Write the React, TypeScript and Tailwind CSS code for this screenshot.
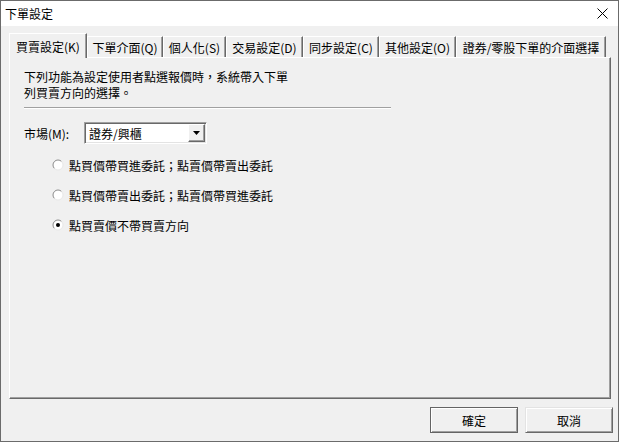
import React from "react";

const tabs = [
  { label: "買賣設定(K)", w: "w-[78px]", active: true },
  { label: "下單介面(Q)", w: "w-[76px]" },
  { label: "個人化(S)", w: "w-[63px]" },
  { label: "交易設定(D)", w: "w-[77px]" },
  { label: "同步設定(C)", w: "w-[76px]" },
  { label: "其他設定(O)", w: "w-[77px]" },
  { label: "證券/零股下單的介面選擇", w: "w-[150px]" },
];

function Radio({ checked }: { checked?: boolean }) {
  return (
    <svg width="12" height="12" viewBox="0 0 12 12" className="shrink-0">
      <circle cx="6" cy="6" r="5" fill="#ffffff" />
      <path d="M 2.46 9.54 A 5 5 0 0 1 9.54 2.46" fill="none" stroke="#8a8a8a" strokeWidth="1" />
      <path d="M 9.54 2.46 A 5 5 0 0 1 2.46 9.54" fill="none" stroke="#e8e8e8" strokeWidth="1" />
      {checked && <circle cx="6" cy="6" r="2" fill="#000000" />}
    </svg>
  );
}

export default function App() {
  return (
    <div className="w-[619px] h-[442px] border border-[#6b6b6b] bg-[#f0f0f0] flex flex-col text-[12px] text-black [font-family:'Noto_Sans_CJK_TC','Noto_Sans_CJK_JP',sans-serif] leading-[15px] overflow-hidden">
      {/* title bar */}
      <div className="h-[25px] bg-white flex items-center justify-between pl-[4px] pr-[10px] shrink-0">
        <span>下單設定</span>
        <svg width="11" height="11" viewBox="0 0 11 11">
          <path d="M0.5 0.5 L10.5 10.5 M10.5 0.5 L0.5 10.5" stroke="#000" strokeWidth="1" />
        </svg>
      </div>

      {/* body */}
      <div className="pt-[7px] pl-[8px] pr-[7px] flex flex-col">
        <div className="flex items-end h-[24px]">
          {tabs.map((t) =>
            t.active ? (
              <div
                key={t.label}
                className={`${t.w} h-[25px] -mb-[1px] relative z-10 bg-[#f0f0f0] border-l border-t border-r border-white border-r-[#696969] shadow-[inset_-1px_0_0_#a0a0a0] flex items-start justify-center pt-[5px]`}
              >
                {t.label}
              </div>
            ) : (
              <div
                key={t.label}
                className={`${t.w} h-[21px] bg-[#f0f0f0] border-l border-t border-r border-white border-r-[#696969] shadow-[inset_-1px_0_0_#a0a0a0] flex items-start justify-center pt-[3px]`}
              >
                {t.label}
              </div>
            )
          )}
        </div>

        {/* panel */}
        <div className="h-[342px] w-[602px] border border-white border-r-[#696969] border-b-[#696969] shadow-[inset_-1px_-1px_0_#a0a0a0] pl-[14px] pt-[11px] flex flex-col">
          <div className="leading-[16px]">下列功能為設定使用者點選報價時，系統帶入下單</div>
          <div className="leading-[16px]">列買賣方向的選擇。</div>
          <div className="mt-[6px] w-[367px] h-[2px] border-t border-[#a0a0a0] border-b border-b-white" />

          <div className="mt-[13px] flex items-center">
            <span className="w-[60px]">市場(M):</span>
            <div className="w-[123px] h-[22px] border border-[#a0a0a0] border-r-white border-b-white bg-white flex items-center shadow-[inset_1px_1px_0_#696969,inset_-1px_-1px_0_#e3e3e3]">
              <span className="flex-1 pl-[4px]">證券/興櫃</span>
              <div className="w-[17px] h-[18px] mr-[1px] bg-[#f0f0f0] border border-white border-r-[#696969] border-b-[#696969] shadow-[inset_-1px_-1px_0_#a0a0a0] flex items-center justify-center">
                <svg width="7" height="4" viewBox="0 0 7 4">
                  <path d="M0 0 H7 L3.5 4 Z" fill="#000" />
                </svg>
              </div>
            </div>
          </div>

          <div className="mt-[6px] ml-[28px] flex flex-col">
            <div className="h-[30px] flex items-center gap-[5px]">
              <Radio />
              <span>點買價帶買進委託；點賣價帶賣出委託</span>
            </div>
            <div className="h-[30px] flex items-center gap-[5px]">
              <Radio />
              <span>點買價帶賣出委託；點賣價帶買進委託</span>
            </div>
            <div className="h-[30px] flex items-center gap-[5px]">
              <Radio checked />
              <span>點買賣價不帶買賣方向</span>
            </div>
          </div>
        </div>
      </div>

      {/* buttons */}
      <div className="mt-[8px] flex justify-end gap-[7px] pr-[5px]">
        <button className="w-[88px] h-[26px] bg-[#f0f0f0] border border-[#646464] shadow-[inset_1px_1px_0_#ffffff,inset_-1px_-1px_0_#a0a0a0] flex items-center justify-center">
          確定
        </button>
        <button className="w-[88px] h-[26px] bg-[#f0f0f0] border border-[#e3e3e3] border-r-[#696969] border-b-[#696969] shadow-[inset_1px_1px_0_#ffffff,inset_-1px_-1px_0_#a0a0a0] flex items-center justify-center">
          取消
        </button>
      </div>
    </div>
  );
}
